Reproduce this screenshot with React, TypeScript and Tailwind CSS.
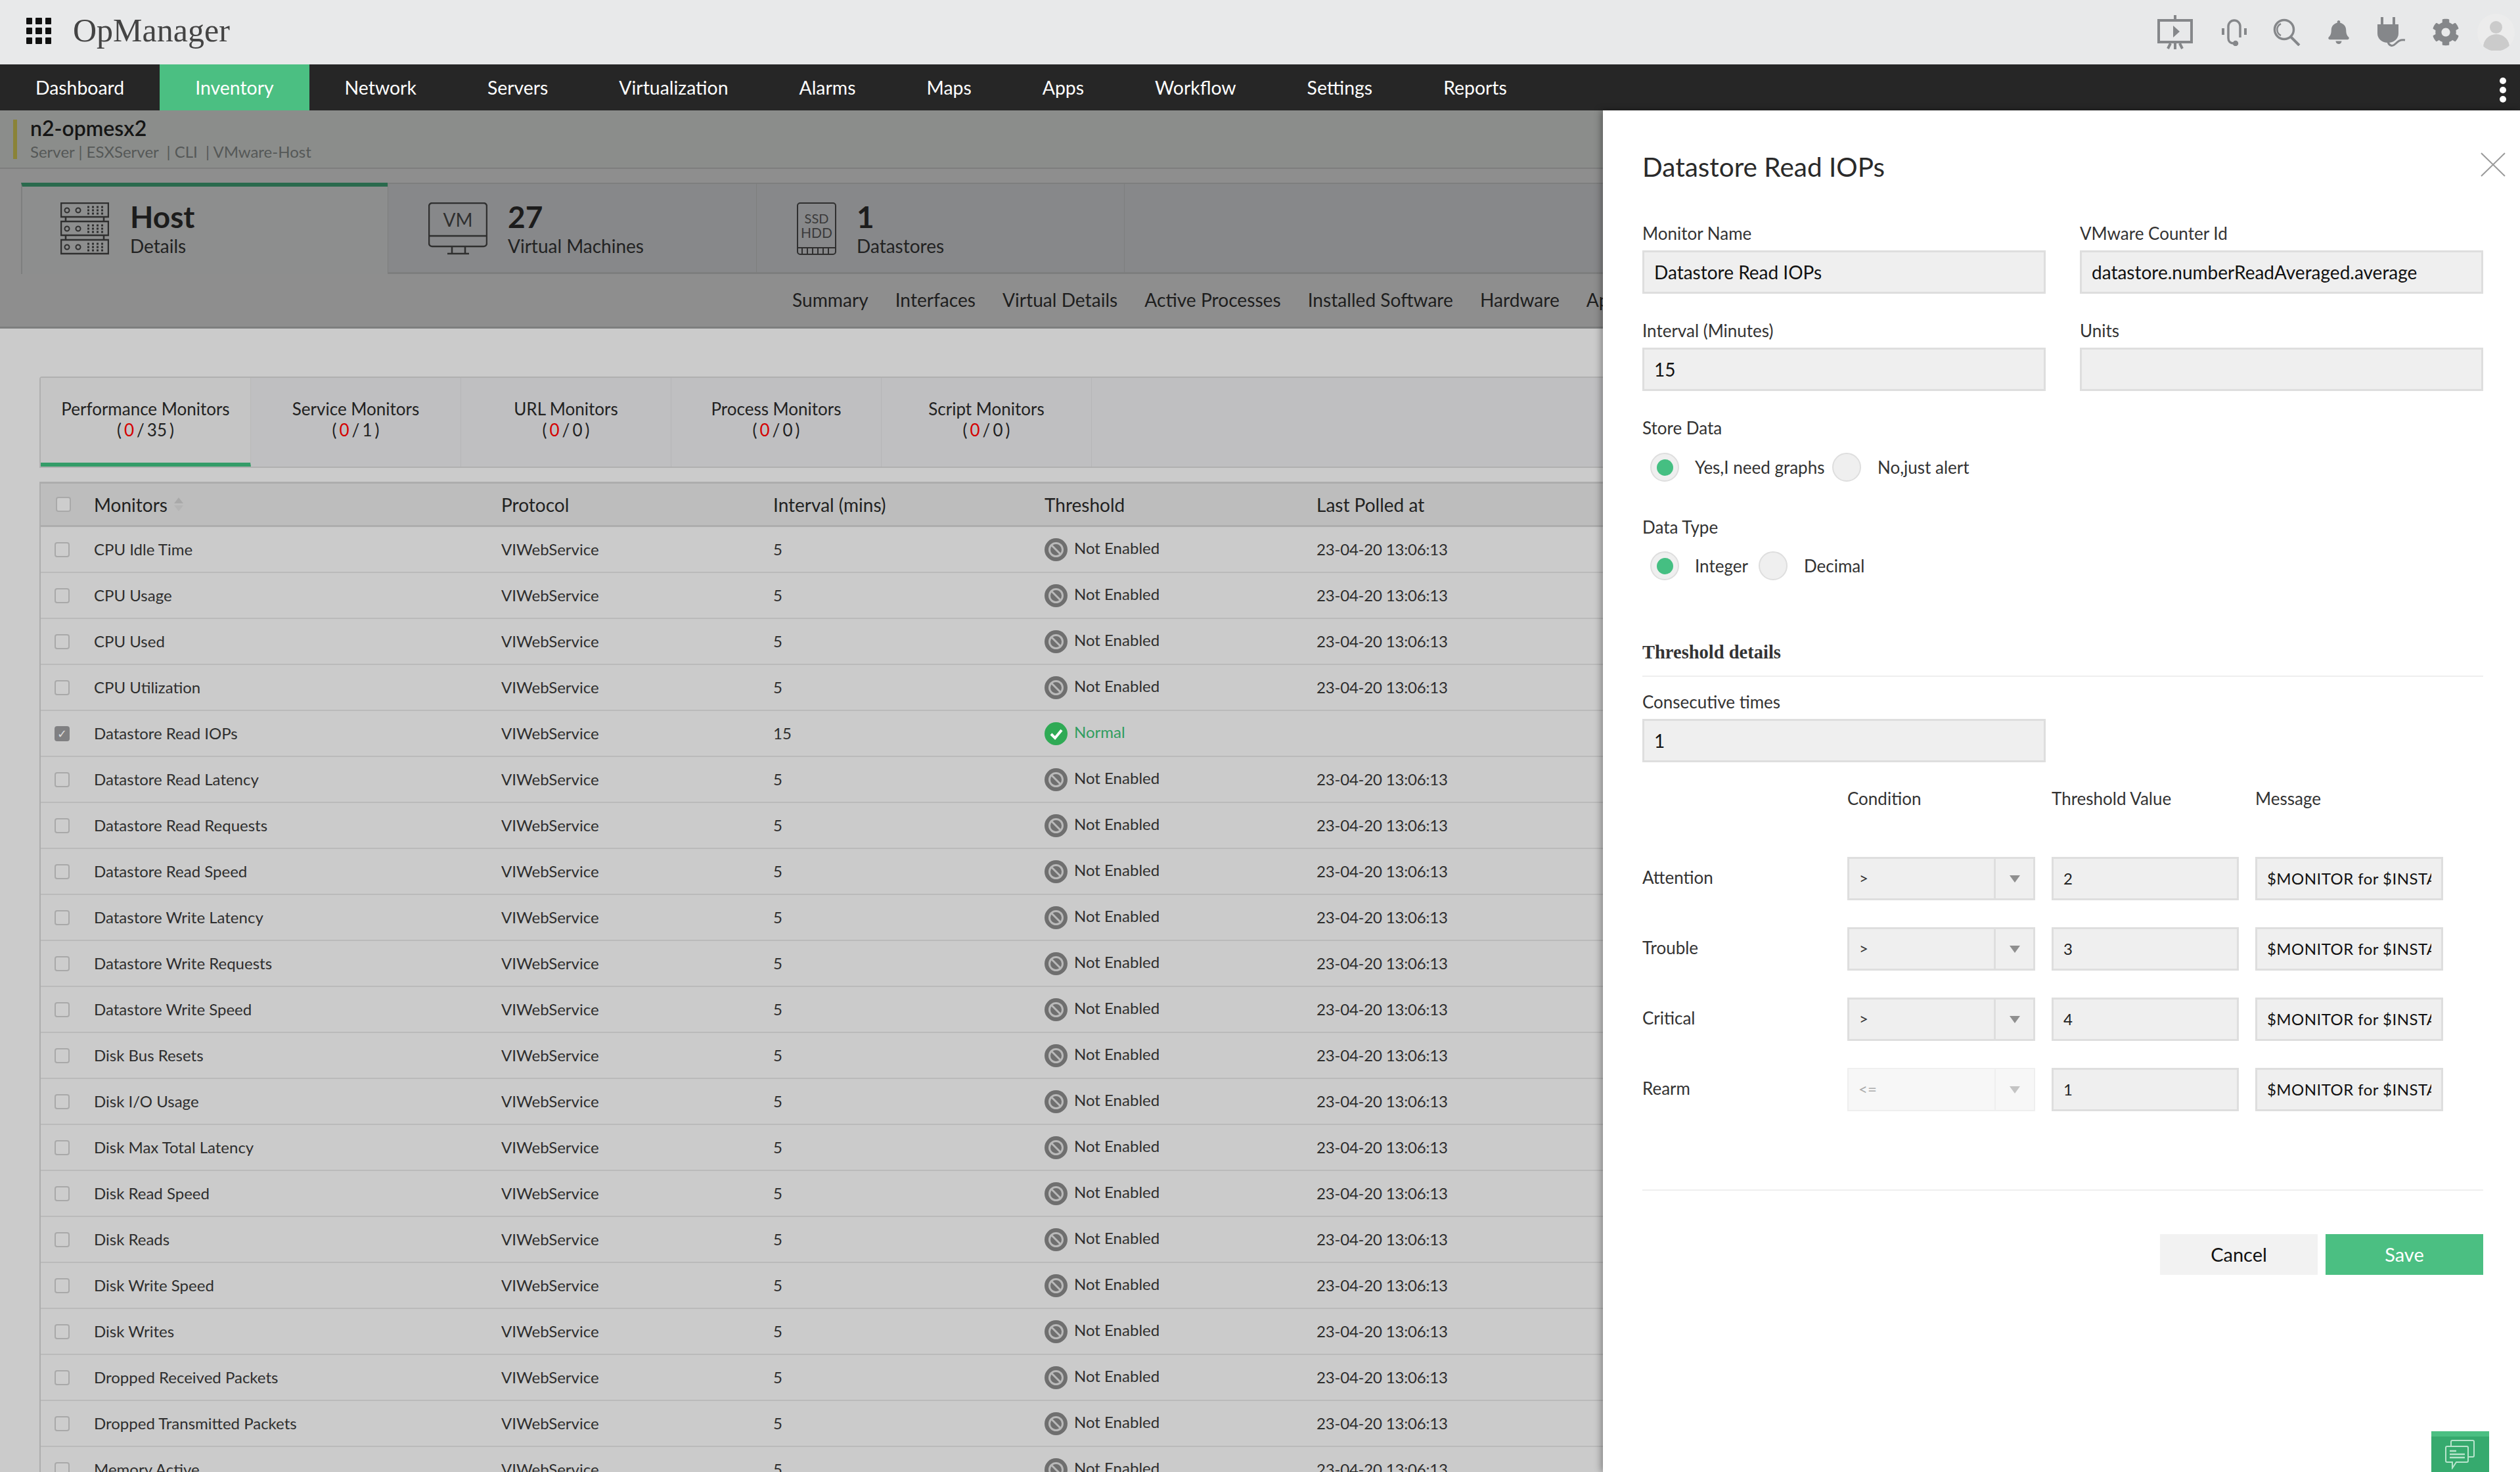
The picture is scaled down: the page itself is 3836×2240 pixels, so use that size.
import { FaBell, FaCog } from "react-icons/fa";

const navItems = ["Dashboard", "Inventory", "Network", "Servers", "Virtualization", "Alarms", "Maps", "Apps", "Workflow", "Settings", "Reports"];
const subTabs = ["Summary", "Interfaces", "Virtual Details", "Active Processes", "Installed Software", "Hardware", "Applications"];
const monitorTabs = [
  { label: "Performance Monitors", total: "35" },
  { label: "Service Monitors", total: "1" },
  { label: "URL Monitors", total: "0" },
  { label: "Process Monitors", total: "0" },
  { label: "Script Monitors", total: "0" },
];
const monitors = [
  "CPU Idle Time", "CPU Usage", "CPU Used", "CPU Utilization", "Datastore Read IOPs", "Datastore Read Latency",
  "Datastore Read Requests", "Datastore Read Speed", "Datastore Write Latency", "Datastore Write Requests",
  "Datastore Write Speed", "Disk Bus Resets", "Disk I/O Usage", "Disk Max Total Latency", "Disk Read Speed",
  "Disk Reads", "Disk Write Speed", "Disk Writes", "Dropped Received Packets", "Dropped Transmitted Packets", "Memory Active",
];
const thresholds = [
  { label: "Attention", cond: ">", value: "2" },
  { label: "Trouble", cond: ">", value: "3" },
  { label: "Critical", cond: ">", value: "4" },
  { label: "Rearm", cond: "<=", value: "1", disabled: true },
];

function GridIcon() {
  return (
    <div className="grid grid-cols-3 gap-[5px] w-[38px] -mt-[4px]">
      {Array.from({ length: 9 }).map((_, i) => (
        <div key={i} className="h-[10px] bg-[#111] rounded-[1px]" />
      ))}
    </div>
  );
}

function TopIcons() {
  return (
    <div className="flex items-center text-[#85878a]">
      <svg width="54" height="52" viewBox="0 0 54 52" fill="none" stroke="currentColor" strokeWidth="4" className="mr-[44px]">
        <path d="M27 0v6M2 8h50v33H2zM27 41v11M16 51l4-8M38 51l-4-8" />
        <path d="M24 16l10 9-10 9z" fill="currentColor" stroke="none" />
      </svg>
      <svg width="38" height="42" viewBox="0 0 38 42" fill="none" stroke="currentColor" strokeWidth="3.5" className="mr-[40px]">
        <path d="M10 30V12a9 9 0 0 1 18 0v17" />
        <path d="M2 15v10M36 15v10" strokeWidth="4" />
        <path d="M10 30c0 5 3 8 8 8h4" />
        <circle cx="21" cy="38" r="2.5" fill="currentColor" />
      </svg>
      <svg width="42" height="42" viewBox="0 0 42 42" fill="none" stroke="currentColor" strokeWidth="3.5" className="mr-[40px]">
        <circle cx="17" cy="17" r="14.5" />
        <path d="M12 8a10 10 0 0 0 0 18" strokeWidth="2.5" />
        <path d="M27 28l13 13" strokeWidth="4" />
      </svg>
      <FaBell size={36} className="mr-[40px]" />
      <svg width="46" height="46" viewBox="0 0 46 46" fill="currentColor" className="mr-[38px]">
        <path d="M6 0h4v11H6zM24 0h4v11h-4zM1 11h32v14c0 8-7 14-16 14S1 33 1 25z" />
        <path d="M17 38c2 6 7 7 11 3s7-7 15-6" fill="none" stroke="currentColor" strokeWidth="3" />
      </svg>
      <FaCog size={42} className="mr-[27px]" />
      <div className="relative w-[57px] h-[57px] rounded-full bg-[#ececec] overflow-hidden">
        <div className="absolute left-[19px] top-[11px] w-[19px] h-[19px] rounded-full bg-[#cbcbcb]" />
        <div className="absolute left-[9px] top-[31px] w-[40px] h-[25px] rounded-t-full rounded-b-[16px] bg-[#cbcbcb]" />
      </div>
    </div>
  );
}

function HostIcon() {
  return (
    <svg width="74" height="80" viewBox="0 0 74 80" fill="none" stroke="#2f2f2f" strokeWidth="2.5" className="shrink-0">
      {[1, 29, 57].map((y) => (
        <g key={y}>
          <rect x="1" y={y} width="72" height="21" />
          <circle cx="10" cy={y + 11} r="3.5" strokeWidth="2" />
          <circle cx="27" cy={y + 11} r="3.5" strokeWidth="2" />
          <path d={`M41 ${y + 6}h28M41 ${y + 11}h28M41 ${y + 16}h28`} strokeDasharray="3 4" strokeWidth="3" />
        </g>
      ))}
      <path d="M8 22v7M66 22v7M8 50v7M66 50v7" />
    </svg>
  );
}

function VmIcon() {
  return (
    <svg width="90" height="80" viewBox="0 0 90 80" fill="none" stroke="#2f2f2f" strokeWidth="2.5" className="shrink-0">
      <rect x="1" y="1" width="88" height="66" rx="5" />
      <path d="M1 51h88M36 67v11M56 67v11M29 78h33" />
      <text x="45" y="37" textAnchor="middle" fill="#2f2f2f" stroke="none" fontSize="28" fontFamily="Lato">VM</text>
    </svg>
  );
}

function DiskIcon() {
  return (
    <svg width="60" height="80" viewBox="0 0 60 80" fill="none" stroke="#2f2f2f" strokeWidth="2" className="shrink-0">
      <rect x="1" y="1" width="58" height="78" rx="4" />
      <path d="M1 69h58M8 70v8M16 70v8M24 70v8M32 70v8M40 70v8M48 70v8" />
      <text x="30" y="32" textAnchor="middle" fill="#3a3a3a" stroke="none" fontSize="20" fontFamily="Lato">SSD</text>
      <text x="30" y="54" textAnchor="middle" fill="#3a3a3a" stroke="none" fontSize="21" fontFamily="Lato">HDD</text>
    </svg>
  );
}

function SummaryTab({ icon, title, sub, width, active }: { icon: React.ReactNode; title: string; sub: string; width: string; active?: boolean }) {
  return (
    <div
      className={
        active
          ? `${width} h-[139px] bg-[#8d8e8e] border-t-[6px] border-t-[#2a6a4d] border-l-2 border-l-[#7e7f7f] pl-[58px] pt-[24px] flex gap-[32px]`
          : `${width} h-[139px] bg-[#87888a] border-t-2 border-t-[#7d7e7e] border-b-[3px] border-b-[#7d7e7e] border-l border-l-[#7d7e7e] pl-[61px] pt-[28px] flex gap-[31px]`
      }
    >
      {icon}
      <div className="flex flex-col -mt-[2px]">
        <span className="text-[46px] leading-[48px] font-bold text-[#1c1c1c]">{title}</span>
        <span className="text-[28px] leading-[36px] mt-[2px] text-[#222]">{sub}</span>
      </div>
    </div>
  );
}

function StatusIcon({ ok }: { ok: boolean }) {
  if (ok) {
    return (
      <svg width="35" height="35" viewBox="0 0 35 35" className="shrink-0">
        <circle cx="17.5" cy="17.5" r="17.5" fill="#2faa55" />
        <path d="M10 18l6 6 10-12" fill="none" stroke="#fff" strokeWidth="4" />
      </svg>
    );
  }
  return (
    <svg width="35" height="35" viewBox="0 0 35 35" className="shrink-0">
      <circle cx="17.5" cy="17.5" r="17.5" fill="#6f6f6f" />
      <circle cx="17.5" cy="17.5" r="10" fill="none" stroke="#b9b9b9" strokeWidth="3" />
      <path d="M11 11l13 13" stroke="#b9b9b9" strokeWidth="3" />
    </svg>
  );
}

function Checkbox({ checked }: { checked?: boolean }) {
  return (
    <div
      className={
        checked
          ? "w-[23px] h-[23px] rounded-[4px] bg-[#808082] flex items-center justify-center text-[#ddd] text-[18px] leading-none"
          : "w-[23px] h-[23px] rounded-[4px] bg-[#cdcdcd] border-2 border-[#a9a9a9]"
      }
    >
      {checked ? "✓" : null}
    </div>
  );
}

function Row({ name }: { name: string }) {
  const ok = name === "Datastore Read IOPs";
  return (
    <div className="flex items-center h-[70px] border-b-[2px] border-[#bababa] text-[24px] text-[#2e2e2e]">
      <div className="w-[81px] pl-[21px]">
        <Checkbox checked={ok} />
      </div>
      <div className="w-[620px]">{name}</div>
      <div className="w-[414px]">VIWebService</div>
      <div className="w-[413px]">{ok ? "15" : "5"}</div>
      <div className="w-[414px] flex items-center gap-[10px]">
        <StatusIcon ok={ok} />
        <span className={ok ? "text-[#2f9d5f] -mt-[4px]" : "-mt-[4px]"}>{ok ? "Normal" : "Not Enabled"}</span>
      </div>
      <div className="whitespace-nowrap tracking-[-0.2px]">{ok ? "" : "23-04-20 13:06:13"}</div>
    </div>
  );
}

function Field({ label, value }: { label: string; value?: string }) {
  return (
    <div className="w-[614px]">
      <div className="h-[30px] mb-[11px] text-[26px] leading-[30px] text-[#333]">{label}</div>
      <div className="h-[66px] bg-[#efefef] border-[3px] border-[#dedede] pl-[15px] flex items-center text-[28px] text-[#111]">{value}</div>
    </div>
  );
}

function Radio({ on }: { on?: boolean }) {
  return (
    <div className="w-[44px] h-[44px] shrink-0 rounded-full bg-[#efefef] border-2 border-[#dedede] flex items-center justify-center">
      {on ? <div className="w-[25px] h-[25px] rounded-full bg-[#45bf82]" /> : null}
    </div>
  );
}

function Panel() {
  return (
    <div className="absolute left-[2440px] top-[168px] bottom-0 w-[1396px] bg-white shadow-[-3px_0_10px_rgba(0,0,0,0.35)] pl-[60px] pr-[56px] pt-[61px] text-[#333]">
      <svg width="38" height="37" viewBox="0 0 38 37" stroke="#999" strokeWidth="2" className="absolute left-[1336px] top-[64px]">
        <path d="M1 1l36 35M37 1L1 36" />
      </svg>
      <div className="h-[50px] text-[40.5px] leading-[50px] text-[#2a2a2a]">Datastore Read IOPs</div>
      <div className="mt-[61px] flex flex-col gap-[41px]">
        <div className="flex gap-[52px]">
          <Field label="Monitor Name" value="Datastore Read IOPs" />
          <Field label="VMware Counter Id" value="datastore.numberReadAveraged.average" />
        </div>
        <div className="flex gap-[52px]">
          <Field label="Interval (Minutes)" value="15" />
          <Field label="Units" />
        </div>
      </div>
      <div className="mt-[41px] h-[30px] text-[26px] leading-[30px]">Store Data</div>
      <div className="mt-[23px] ml-[12px] flex items-center text-[26px]">
        <Radio on />
        <span className="ml-[24px] w-[209px]">Yes,I need graphs</span>
        <Radio />
        <span className="ml-[25px]">No,just alert</span>
      </div>
      <div className="mt-[54px] h-[30px] text-[26px] leading-[30px]">Data Type</div>
      <div className="mt-[22px] ml-[12px] flex items-center text-[26px]">
        <Radio on />
        <span className="ml-[24px] w-[97px]">Integer</span>
        <Radio />
        <span className="ml-[25px]">Decimal</span>
      </div>
      <div className="mt-[95px] pb-[21px] border-b-2 border-[#eeeeee] h-[52px] text-[28.5px] leading-[30px] font-bold font-['Liberation_Serif',serif] text-[#333]">Threshold details</div>
      <div className="mt-[23px]">
        <Field label="Consecutive times" value="1" />
      </div>
      <div className="mt-[40px] grid grid-cols-[287px_286px_285px_286px] gap-x-[25px] h-[30px] text-[26px] leading-[30px]">
        <span />
        <span>Condition</span>
        <span>Threshold Value</span>
        <span>Message</span>
      </div>
      <div className="mt-[74px] grid grid-cols-[287px_286px_285px_286px] gap-x-[25px] gap-y-[41px]">
        {thresholds.map((t) => (
          <div key={t.label} className="contents">
            <div className="h-[66px] flex items-center text-[26px] -mt-[2px]">{t.label}</div>
            <div className={t.disabled ? "h-[66px] flex bg-[#f7f7f7] border-2 border-[#efefef] text-[#aaa]" : "h-[66px] flex bg-[#efefef] border-[3px] border-[#dedede] text-[#333]"}>
              <div className="flex-1 pl-[15px] flex items-center text-[24px] -mt-[3px]">{t.cond}</div>
              <div className={t.disabled ? "w-[60px] border-l-2 border-[#efefef] flex items-center justify-center" : "w-[60px] border-l-[3px] border-[#dedede] flex items-center justify-center"}>
                <div className={t.disabled ? "w-0 h-0 border-x-[8px] border-x-transparent border-t-[11px] border-t-[#c4c4c4]" : "w-0 h-0 border-x-[8px] border-x-transparent border-t-[11px] border-t-[#8f8f8f]"} />
              </div>
            </div>
            <div className="h-[66px] bg-[#efefef] border-[3px] border-[#dedede] pl-[15px] flex items-center text-[24px] text-[#222]">{t.value}</div>
            <div className="h-[66px] bg-[#efefef] border-[3px] border-[#dedede] px-[15px] flex items-center text-[24px] text-[#111]">
              <div className="overflow-hidden whitespace-nowrap tracking-[0.45px]">$MONITOR for $INSTANCE</div>
            </div>
          </div>
        ))}
      </div>
      <div className="mt-[119px] border-t-2 border-[#eeeeee]" />
      <div className="mt-[66px] flex justify-end gap-[12px] text-[29px]">
        <div className="w-[240px] h-[62px] bg-[#f2f2f2] flex items-center justify-center text-[#111]">Cancel</div>
        <div className="w-[240px] h-[62px] bg-[#4bbf82] flex items-center justify-center text-white">Save</div>
      </div>
      <div className="absolute left-[1261px] bottom-0 w-[88px] h-[62px] bg-[#36aa6e] border-t-[8px] border-[#4bbf82] flex items-center justify-center">
        <svg width="46" height="46" viewBox="0 0 46 46" fill="none" stroke="#b8e4cc" strokeWidth="2">
          <path d="M9 11V4a2 2 0 0 1 2-2h31a2 2 0 0 1 2 2v21a2 2 0 0 1-2 2h-6" />
          <path d="M3 11h30a2 2 0 0 1 2 2v20a2 2 0 0 1-2 2H17l-6 9v-9H3a2 2 0 0 1-2-2V13a2 2 0 0 1 2-2z" />
          <path d="M7 18h10M7 23h23M7 28h23" strokeWidth="2.5" />
        </svg>
      </div>
    </div>
  );
}

export default function App() {
  return (
    <div className="relative w-[3836px] h-[2240px] overflow-hidden bg-[#cbcbcb] font-['Lato',sans-serif]">
      {/* top bar */}
      <div className="h-[98px] bg-[#e8e9ea] flex items-center pl-[40px] pr-[8px]">
        <GridIcon />
        <span className="ml-[33px] -mt-[6px] text-[50px] font-['Liberation_Serif',serif] text-[#444]">OpManager</span>
        <div className="ml-auto">
          <TopIcons />
        </div>
      </div>

      {/* main nav */}
      <div className="h-[70px] bg-[#262626] flex items-stretch text-[28.4px] text-white relative">
        {navItems.map((item) => (
          <div key={item} className={item === "Inventory" ? "px-[54px] flex items-center bg-[#4bbf82]" : "px-[54px] flex items-center"}>
            {item}
          </div>
        ))}
        <div className="absolute left-[3805px] top-[20px] flex flex-col gap-[4px]">
          <div className="w-[10px] h-[10px] rounded-full bg-white" />
          <div className="w-[10px] h-[10px] rounded-full bg-white" />
          <div className="w-[10px] h-[10px] rounded-full bg-white" />
        </div>
      </div>

      {/* device header */}
      <div className="h-[89px] bg-[#8b8d8b] border-b-2 border-[#7d7e7e] pl-[20px] pt-[14px]">
        <div className="flex gap-[20px]">
          <div className="w-[6px] h-[60px] bg-[#8a8338]" />
          <div className="-mt-[4px]">
            <div className="text-[32px] leading-[34px] font-semibold text-[#151515]">n2-opmesx2</div>
            <div className="text-[24px] leading-[32px] mt-[3px] text-[#555857]">Server | ESXServer&nbsp; | CLI&nbsp; | VMware-Host</div>
          </div>
        </div>
      </div>

      {/* summary tabs */}
      <div className="h-[243px] bg-[#8e8e8e] border-b-[3px] border-[#7d7e7e] pt-[21px]">
        <div className="flex pl-[32px]">
          <SummaryTab active icon={<HostIcon />} title="Host" sub="Details" width="w-[558px]" />
          <SummaryTab icon={<VmIcon />} title="27" sub="Virtual Machines" width="w-[561px]" />
          <SummaryTab icon={<DiskIcon />} title="1" sub="Datastores" width="w-[560px]" />
          <div className="flex-1 h-[139px] bg-[#87888a] border-t-2 border-b-[3px] border-l border-[#7d7e7e]" />
        </div>
        <div className="flex gap-[41px] pl-[1206px] pt-[21px] text-[28.15px] leading-[36px] whitespace-nowrap text-[#1e1e1e]">
          {subTabs.map((t) => (
            <span key={t}>{t}</span>
          ))}
        </div>
      </div>

      {/* monitor tabs */}
      <div className="mt-[73px] ml-[60px] h-[139px] flex bg-[#bfbfc1] border-t-2 border-b-2 border-l-2 border-[#b0b0b0] rounded-tl-[4px]">
        {monitorTabs.map((t, i) => (
          <div
            key={t.label}
            className={
              i === 0
                ? "w-[320px] h-full bg-[#c5c5c5] border-b-[6px] border-[#349c68] border-r border-r-[#b9b9b9] pt-[31px] text-center text-[26px] leading-[32px] text-[#222]"
                : "w-[320px] h-full border-r border-[#b5b5b7] pt-[31px] text-center text-[26px] leading-[32px] text-[#222]"
            }
          >
            <div>{t.label}</div>
            <div className="flex justify-center gap-[4px]">
              <span>(</span>
              <span className="text-[#d40000]">0</span>
              <span>/</span>
              <span>{t.total}</span>
              <span>)</span>
            </div>
          </div>
        ))}
      </div>

      {/* table */}
      <div className="mt-[21px] ml-[60px] border-l-2 border-t-[3px] border-[#adadad]">
        <div className="flex items-center h-[66px] bg-[#bdbdbd] border-b-[3px] border-[#adadad] text-[28px] text-[#222]">
          <div className="w-[81px] pl-[23px]">
            <Checkbox />
          </div>
          <div className="w-[620px] flex items-center gap-[10px]">
            Monitors
            <div className="flex flex-col gap-[3px]">
              <div className="w-0 h-0 border-x-[7px] border-x-transparent border-b-[9px] border-b-[#a9a9a9]" />
              <div className="w-0 h-0 border-x-[7px] border-x-transparent border-t-[9px] border-t-[#b4b4b4]" />
            </div>
          </div>
          <div className="w-[414px]">Protocol</div>
          <div className="w-[413px]">Interval (mins)</div>
          <div className="w-[414px]">Threshold</div>
          <div>Last Polled at</div>
        </div>
        {monitors.map((m) => (
          <Row key={m} name={m} />
        ))}
      </div>

      <Panel />
    </div>
  );
}
